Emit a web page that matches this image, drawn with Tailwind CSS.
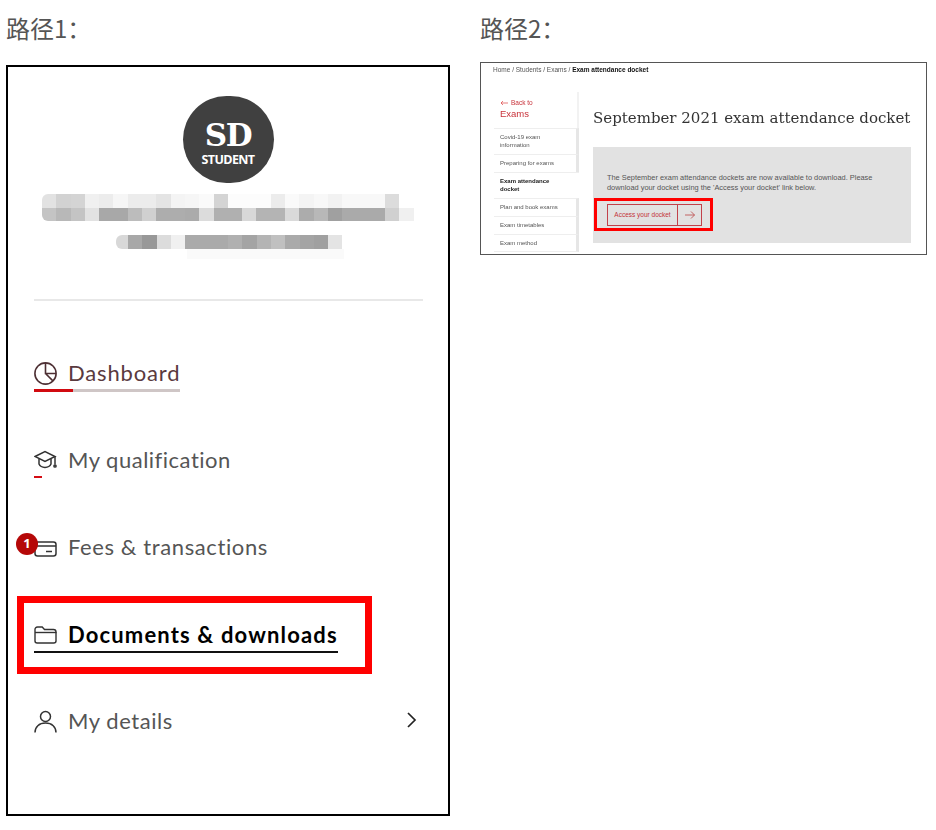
<!DOCTYPE html>
<html lang="zh">
<head>
<meta charset="utf-8">
<script src="https://cdn.jsdelivr.net/npm/@tailwindcss/browser@4"></script>
<title>路径</title>
</head>
<body class="bg-white">
<div class="w-[936px] h-[830px] flex overflow-hidden font-['Liberation_Sans',sans-serif]">
  <!-- Path 1 -->
  <section class="w-[480px] pl-[6px] shrink-0">
    <h2 class="h-[65px] pt-[11px] text-[24px] leading-[34px] font-normal text-[#555] font-['Noto_Sans_CJK_SC','Noto_Sans',sans-serif]">路径1：</h2>
    <div class="w-[444px] h-[751px] border-2 border-black bg-white px-[26px] pt-[29px] flex flex-col font-['Lato',sans-serif]">
      <div class="self-center w-[91px] h-[87px] rounded-full bg-[#404040] text-white flex flex-col items-center pt-[24px]">
        <span class="text-[31px] leading-[30px] font-bold font-['DejaVu_Serif',serif] tracking-[-1.5px]">SD</span>
        <span class="mt-[2px] text-[12.500px] leading-[15px] font-bold font-['Open_Sans',sans-serif] tracking-[-0.6px]">STUDENT</span>
      </div>
      <div class="mt-[11px] ml-[8px] h-[106px] flex flex-col" aria-hidden="true">
        <div class="flex h-[14px]">
          <i class="w-[14.3px] rounded-tl-[6px] bg-[#e2e2e2]"></i><i class="w-[14.3px] bg-[#d2d2d2]"></i><i class="w-[14.3px] bg-[#d4d4d4]"></i><i class="w-[14.3px] bg-[#f0f0f0]"></i><i class="w-[14.3px] bg-[#ececec]"></i><i class="w-[14.3px] bg-[#f6f6f6]"></i><i class="w-[14.3px] bg-[#ececec]"></i><i class="w-[14.3px] bg-[#ececec]"></i><i class="w-[14.3px] bg-[#e4e4e4]"></i><i class="w-[14.3px] bg-[#f4f4f4]"></i><i class="w-[14.3px] bg-[#f6f6f6]"></i><i class="w-[14.3px] bg-[#fafafa]"></i><i class="w-[14.3px] bg-[#d4d4d4]"></i><i class="w-[14.3px] bg-[#fcfcfc]"></i><i class="w-[14.3px] bg-[#fcfcfc]"></i><i class="w-[14.3px] bg-[#fcfcfc]"></i><i class="w-[14.3px] bg-[#ececec]"></i><i class="w-[14.3px] bg-[#fafafa]"></i><i class="w-[14.3px] bg-[#f4f4f4]"></i><i class="w-[14.3px] bg-[#f8f8f8]"></i><i class="w-[14.3px] bg-[#f2f2f2]"></i><i class="w-[14.3px] bg-[#f8f8f8]"></i><i class="w-[14.3px] bg-[#f8f8f8]"></i><i class="w-[14.3px] bg-[#f8f8f8]"></i><i class="w-[14.3px] bg-[#dcdcdc]"></i>
        </div>
        <div class="flex h-[13px]">
          <i class="w-[14.3px] rounded-bl-[6px] bg-[#c4c4c4]"></i><i class="w-[14.3px] bg-[#b8b8b8]"></i><i class="w-[14.3px] bg-[#c4c4c4]"></i><i class="w-[14.3px] bg-[#e2e2e2]"></i><i class="w-[14.3px] bg-[#a8a8a8]"></i><i class="w-[14.3px] bg-[#a8a8a8]"></i><i class="w-[14.3px] bg-[#bcbcbc]"></i><i class="w-[14.3px] bg-[#d0d0d0]"></i><i class="w-[14.3px] bg-[#adadad]"></i><i class="w-[14.3px] bg-[#adadad]"></i><i class="w-[14.3px] bg-[#ababab]"></i><i class="w-[14.3px] bg-[#dcdcdc]"></i><i class="w-[14.3px] bg-[#b0b0b0]"></i><i class="w-[14.3px] bg-[#b0b0b0]"></i><i class="w-[14.3px] bg-[#d8d8d8]"></i><i class="w-[14.3px] bg-[#b4b4b4]"></i><i class="w-[14.3px] bg-[#b4b4b4]"></i><i class="w-[14.3px] bg-[#dadada]"></i><i class="w-[14.3px] bg-[#acacac]"></i><i class="w-[14.3px] bg-[#b8b8b8]"></i><i class="w-[14.3px] bg-[#a0a0a0]"></i><i class="w-[14.3px] bg-[#aaaaaa]"></i><i class="w-[14.3px] bg-[#aaaaaa]"></i><i class="w-[14.3px] bg-[#aaaaaa]"></i><i class="w-[14.3px] bg-[#d0d0d0]"></i><i class="w-[14.3px] bg-[#f0f0f0]"></i>
        </div>
        <div class="flex h-[14px] mt-[14px] ml-[74px]">
          <i class="w-[12px] rounded-l-[6px] bg-[#d8d8d8]"></i><i class="w-[14.3px] bg-[#a8a8a8]"></i><i class="w-[14.3px] bg-[#989898]"></i><i class="w-[14.3px] bg-[#dcdcdc]"></i><i class="w-[14.3px] bg-[#f0f0f0]"></i><i class="w-[14.3px] bg-[#aaaaaa]"></i><i class="w-[14.3px] bg-[#aaaaaa]"></i><i class="w-[14.3px] bg-[#aaaaaa]"></i><i class="w-[14.3px] bg-[#b0b0b0]"></i><i class="w-[14.3px] bg-[#a4a4a4]"></i><i class="w-[14.3px] bg-[#b4b4b4]"></i><i class="w-[14.3px] bg-[#c0c0c0]"></i><i class="w-[14.3px] bg-[#aaaaaa]"></i><i class="w-[14.3px] bg-[#a4a4a4]"></i><i class="w-[14.3px] bg-[#a0a0a0]"></i><i class="w-[14.3px] bg-[#e4e4e4]"></i>
        </div>
        <div class="flex h-[10px] ml-[145px] w-[157px] bg-[#fafafa]"></div>
      </div>
      <div class="w-[389px] h-[2px] mt-[-1px] bg-[#e8e8e8]"></div>

      <nav class="flex flex-col text-[22px] leading-[28px] text-[#555] tracking-[0.5px]">
        <!-- Dashboard -->
        <a class="mt-[58px] h-[28px] w-[146px] flex items-center gap-[12px] text-[#5a3a3e] tracking-[0.85px]">
          <svg class="w-[23px] h-[23px] shrink-0" viewBox="0 0 23 23" fill="none" stroke="#4d2f33" stroke-width="1.6"><circle cx="11.5" cy="11.5" r="10.6"/><path d="M11.5 1v10.5h10.5M11.5 11.5l7.4 7.4"/></svg>
          <span class="ml-[-1px]">Dashboard</span>
        </a>
        <div class="mt-[2px] w-[146px] h-[3px] bg-[#cfc6c6]"><div class="w-[39px] h-[3px] bg-[#d10a10]"></div></div>

        <!-- My qualification -->
        <a class="mt-[54px] h-[28px] flex items-center gap-[12px]">
          <svg class="w-[23px] h-[20px] shrink-0" viewBox="0 0 23 20" fill="none" stroke="#333" stroke-width="1.5"><path d="M1 6.5 11 1.5l10 5-10 5z"/><path d="M5 9v5c2 4.5 10 4.5 12 0V9"/><path d="M21 6.5v8"/><circle cx="21" cy="16" r="1.1"/></svg>
          <span class="ml-[-1px]">My qualification</span>
        </a>
        <div class="mt-[2px] w-[8px] h-[2px] bg-[#d40d14]"></div>

        <!-- Fees -->
        <a class="relative mt-[55px] h-[28px] flex items-center gap-[12px] tracking-[0.6px]">
          <svg class="w-[23px] h-[16px] shrink-0 mt-[3px]" viewBox="0 0 23 16" fill="none" stroke="#333" stroke-width="1.5"><rect x="1" y="1" width="21" height="14" rx="2.5"/><path d="M1 5h21M12 10.5h6"/></svg>
          <span class="ml-[-1px]">Fees &amp; transactions</span>
          <span class="absolute left-[-18px] top-[0px] w-[22px] h-[22px] rounded-full bg-[#b50808] text-white text-[13px] leading-[21px] font-bold text-center tracking-normal font-['Open_Sans',sans-serif]">1</span>
        </a>

        <!-- Documents -->
        <div class="relative mt-[60px] h-[33px]">
          <a class="h-[28px] flex items-center gap-[12px] text-black font-bold tracking-[1.15px] w-fit">
            <svg class="w-[23px] h-[18px] shrink-0" viewBox="0 0 23 18" fill="none" stroke="#333" stroke-width="1.4"><path d="M1 15V3.5C1 2 2 1 3.5 1h4.7l2.3 2.5h9c1.4 0 2.5 1 2.5 2.5v9c0 1.2-1 2-2.3 2H3.2C2 17 1 16.200 1 15z"/><path d="M1 6.500h21.500"/></svg>
            <span class="ml-[-1px]">Documents &amp; downloads</span>
          </a>
          <div class="mt-[2px] w-[304px] h-[2px] bg-[#111]"></div>
          <div class="absolute left-[-17px] top-[-25px] w-[355px] h-[78px] border-[7px] border-[#ff0000]"></div>
        </div>

        <!-- My details -->
        <a class="mt-[53px] h-[28px] flex items-center gap-[12px] tracking-[0.55px]">
          <svg class="w-[23px] h-[23px] shrink-0" viewBox="0 0 23 23" fill="none" stroke="#333" stroke-width="1.5"><circle cx="11.500" cy="6.500" r="5"/><path d="M1 22.500c0-5.500 4-9.500 10.500-9.500S22 17 22 22.500"/></svg>
          <span class="ml-[-1px]">My details</span>
          <svg class="ml-auto mr-[5px] w-[11px] h-[16px] mt-[-3px]" viewBox="0 0 11 16" fill="none" stroke="#222" stroke-width="1.7"><path d="M2 1l7 7-7 7"/></svg>
        </a>
      </nav>
    </div>
  </section>

  <!-- Path 2 -->
  <section class="w-[447px] shrink-0">
    <h2 class="h-[62px] pt-[11px] text-[24px] leading-[34px] font-normal text-[#555] font-['Noto_Sans_CJK_SC','Noto_Sans',sans-serif]">路径2：</h2>
    <div class="relative w-[447px] h-[193px] border border-[#555] bg-white overflow-hidden pl-[12px] text-[#444]">
      <div class="blur-[0.25px] antialiased">
      <div class="h-[29px] pt-[3px] text-[6.500px] leading-[7px] text-[#555] whitespace-nowrap">Home / Students / Exams / <b class="text-[#111]">Exam attendance docket</b></div>
      <div class="flex">
        <aside class="w-[85px] shrink-0 ml-[1px] text-[6px] leading-[8px] text-[#555]">
          <div class="h-[36px] pl-[6px] pt-[7px] border-r-2 border-[#f2f2f2] text-[#c8323a]">
            <div class="flex items-center gap-[3px] h-[8px] text-[6.500px]"><svg class="w-[8px] h-[6px]" viewBox="0 0 8 6" fill="none" stroke="#d44" stroke-width=".7"><path d="M8 3H1M3 1 1 3l2 2"/></svg><span>Back to</span></div>
            <div class="mt-[1px] text-[9.500px] leading-[11px]">Exams</div>
          </div>
          <div class="h-[26px] pl-[6px] pt-[4px] border-t border-[#eee] border-r-3 border-r-[#e6e6e6]">Covid-19 exam<br>information</div>
          <div class="h-[18px] pl-[6px] pt-[4px] border-t border-[#eee] border-r-3 border-r-[#e6e6e6]">Preparing for exams</div>
          <div class="h-[26px] pl-[6px] pt-[4px] border-t border-[#eee] font-bold text-[#222]">Exam attendance<br>docket</div>
          <div class="h-[18px] pl-[6px] pt-[4px] border-t border-[#eee] border-r-3 border-r-[#e6e6e6]">Plan and book exams</div>
          <div class="h-[18px] pl-[6px] pt-[4px] border-t border-[#eee] border-r-3 border-r-[#e6e6e6]">Exam timetables</div>
          <div class="h-[18px] pl-[6px] pt-[4px] border-t border-b border-[#eee] border-r-3 border-r-[#e6e6e6]">Exam method</div>
        </aside>
        <main class="ml-[14px] w-[318px] shrink-0">
          <h3 class="mt-[15px] h-[40px] text-[15px] leading-[22px] font-normal text-[#333] font-['DejaVu_Serif',serif] whitespace-nowrap">September 2021 exam attendance docket</h3>
          <div class="relative h-[96px] bg-[#e2e2e2] pl-[14px] pt-[26px] text-[7.400px] leading-[10px] text-[#555]">
            <p class="whitespace-nowrap">The September exam attendance dockets are now available to download. Please<br>download your docket using the 'Access your docket' link below.</p>
            <div class="mt-[11px] w-[95px] h-[22px] border border-[#c2414a] flex text-[6.500px] text-[#c2323a]">
              <span class="w-[70px] flex items-center justify-center border-r border-[#c2414a]">Access your docket</span>
              <span class="flex-1 flex items-center justify-center"><svg class="w-[10px] h-[8px]" viewBox="0 0 10 8" fill="none" stroke="#b44" stroke-width=".8"><path d="M0 4h9.500M6 .5 9.500 4 6 7.500"/></svg></span>
            </div>
            <div class="absolute left-[1px] top-[51px] w-[119px] h-[33px] border-[3px] border-[#ff0000]"></div>
          </div>
        </main>
      </div>
      </div>
    </div>
  </section>
</div>
</body>
</html>
